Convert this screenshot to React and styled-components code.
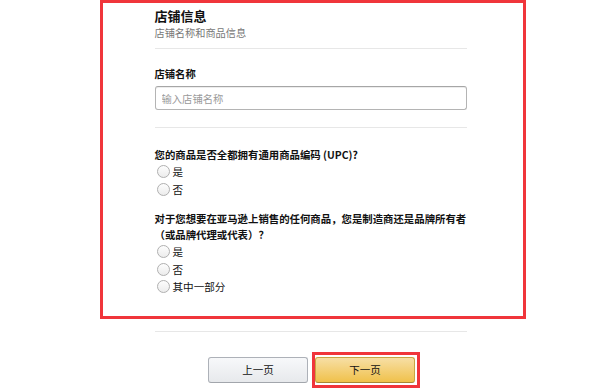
import React from 'react'
import styled, { createGlobalStyle } from 'styled-components'

const GlobalStyle = createGlobalStyle`
  * { box-sizing: border-box; }
  body {
    margin: 0;
    background: #fff;
    font-family: "Liberation Sans", Arial, "Noto Sans CJK SC", sans-serif;
    color: #111;
  }
`

const questions = [
  {
    id: 'upc',
    text: '您的商品是否全都拥有通用商品编码 (UPC)?',
    options: ['是', '否'],
  },
  {
    id: 'brand',
    text: '对于您想要在亚马逊上销售的任何商品，您是制造商还是品牌所有者（或品牌代理或代表）？',
    options: ['是', '否', '其中一部分'],
  },
]

const App = () => {
  return (
    <Page>
      <GlobalStyle />
      <Highlight>
        <Column>
          <Title>店铺信息</Title>
          <Subtitle>店铺名称和商品信息</Subtitle>
          <Divider />
          <Label>店铺名称</Label>
          <Input placeholder="输入店铺名称" />
          <Divider $top={17} />
          {questions.map((q, i) => (
            <Question key={q.id} $top={i === 0 ? 19 : 13}>
              <QuestionText>{q.text}</QuestionText>
              {q.options.map(opt => (
                <RadioRow key={opt}>
                  <Radio type="radio" name={q.id} />
                  <span>{opt}</span>
                </RadioRow>
              ))}
            </Question>
          ))}
        </Column>
      </Highlight>
      <Footer>
        <Divider $top={12} />
        <ButtonRow>
          <Button>上一页</Button>
          <Marked>
            <Button $primary>下一页</Button>
          </Marked>
        </ButtonRow>
      </Footer>
    </Page>
  )
}

const Page = styled.div`
  width: 600px;
  height: 389px;
  overflow: hidden;
  display: flex;
  flex-direction: column;
`

const Highlight = styled.div`
  margin-left: 100px;
  width: 426px;
  border: 3.5px solid #f0353b;
  padding: 4px 0 20px 51.5px;
`

const Column = styled.div`
  width: 312px;
  display: flex;
  flex-direction: column;
`

const Title = styled.div`
  font-family: "Noto Sans CJK SC", sans-serif;
  font-size: 13px;
  font-weight: 700;
  line-height: 17px;
`

const Subtitle = styled.div`
  font-family: "Noto Sans CJK SC", sans-serif;
  font-size: 10.2px;
  line-height: 14px;
  margin-top: 2px;
  color: #777;
`

const Divider = styled.div`
  height: 1px;
  background: #e7e7e7;
  margin-top: ${p => (p.$top ?? 8)}px;
`

const Label = styled.div`
  font-family: "Noto Sans CJK SC", sans-serif;
  font-size: 10.3px;
  font-weight: 700;
  line-height: 14px;
  margin-top: 18px;
`

const Input = styled.input`
  margin-top: 5px;
  height: 24px;
  width: 100%;
  border: 1px solid #b4b4b4;
  border-top-color: #a6a6a6;
  border-radius: 3px;
  box-shadow: inset 0 1px 0 rgba(0, 0, 0, 0.07);
  padding: 0 6px;
  font-family: "Noto Sans CJK SC", sans-serif;
  font-size: 10.3px;
  outline: none;
  &::placeholder { color: #9a9a9a; }
`

const Question = styled.div`
  margin-top: ${p => p.$top}px;
  display: flex;
  flex-direction: column;
`

const QuestionText = styled.div`
  font-family: "Noto Sans CJK SC", sans-serif;
  font-size: 10.4px;
  font-weight: 700;
  line-height: 16px;
`

const RadioRow = styled.label`
  display: flex;
  align-items: center;
  height: 17.5px;
  gap: 3px;
  padding-left: 2px;
  font-family: "Noto Sans CJK SC", sans-serif;
  font-size: 10.6px;
  color: #111;
`

const Radio = styled.input`
  appearance: none;
  -webkit-appearance: none;
  flex-shrink: 0;
  margin: 0;
  width: 13px;
  height: 13px;
  border-radius: 50%;
  border: 1px solid #b0b0b0;
  background: linear-gradient(#fdfdfd, #ececec);
`

const Footer = styled.div`
  margin-left: 155px;
  width: 312px;
  display: flex;
  flex-direction: column;
`

const ButtonRow = styled.div`
  margin-top: 20px;
  display: flex;
  align-items: center;
  gap: 4px;
  padding-left: 53px;
`

const Marked = styled.div`
  border: 3px solid #f0353b;
  padding: 2px 2px 2px 0;
`

const Button = styled.button`
  width: 100px;
  height: 26px;
  border-radius: 3px;
  border: 1px solid ${p => (p.$primary ? '#c8a543' : '#adb1b8')};
  border-bottom-color: ${p => (p.$primary ? '#a88734' : '#a2a6ac')};
  background: ${p => (p.$primary
    ? 'linear-gradient(#f7dfa5, #f0c14b)'
    : 'linear-gradient(#f7f8fa, #e7e9ec)')};
  font-family: "Noto Sans CJK SC", sans-serif;
  font-size: 10.5px;
  color: #111;
  padding: 0;
`

export default App
